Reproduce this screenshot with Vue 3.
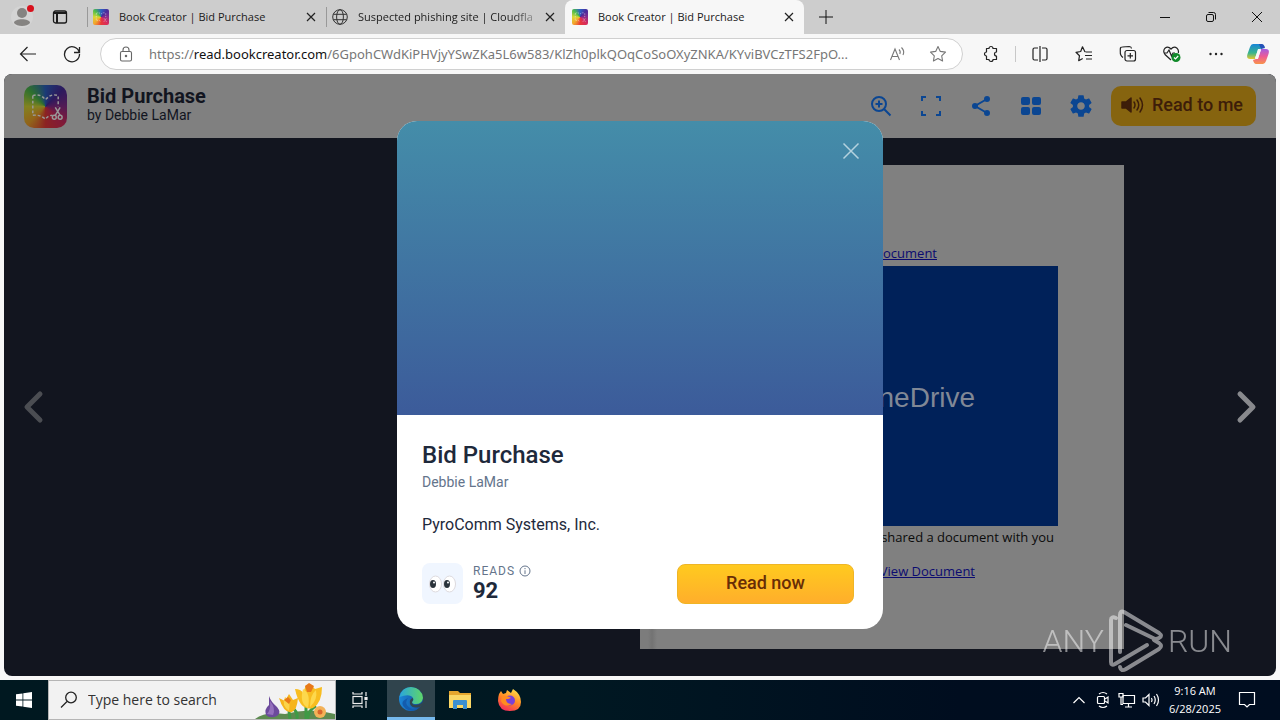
<template>
  <div class="desktop">
    <div class="browser">
      <!-- tab strip -->
      <div class="tab-strip">
        <button class="icon-btn profile" aria-label="Profile">
          <svg width="24" height="24" viewBox="0 0 24 24">
            <circle cx="12" cy="12" r="11" fill="#d4d4d4" />
            <circle cx="12" cy="8" r="5" fill="#858381" />
            <path d="M4 18c0-5 16-5 16 0c-3 4-13 4-16 0z" fill="#858381" />
            <circle cx="20.500" cy="3.500" r="3.500" fill="#d8101c" />
          </svg>
        </button>
        <button class="icon-btn tab-actions" aria-label="Tab actions">
          <svg width="16" height="16" viewBox="0 0 16 16" fill="none" stroke="#1b1b1b" stroke-width="1.300">
            <rect x="1.500" y="2" width="13" height="12" rx="2" />
            <path d="M2 4h12M5 4v10" stroke-width="2" />
          </svg>
        </button>
        <div v-for="(tab, i) in tabs" :key="i" class="tab" :class="{ active: tab.active }">
          <svg v-if="tab.icon === 'globe'" class="favicon" viewBox="0 0 16 16" fill="none" stroke="#333">
            <circle cx="8" cy="8" r="7.300" />
            <ellipse cx="8" cy="8" rx="3.400" ry="7.300" />
            <path d="M1.300 5.300h13.400M1.300 10.700h13.400" />
          </svg>
          <span v-else class="favicon rainbow">
            <svg viewBox="0 0 44 44" fill="none" stroke="#fff" stroke-opacity=".6" stroke-width="2" stroke-dasharray="4 3">
              <path d="M9 12q7-4 13 2q6-6 13-2v10M9 12v20q7-3 13 3M30 35l7-10M37 35l-7-10" />
            </svg>
          </span>
          <span class="tab-title" :class="{ faded: tab.faded }">{{ tab.title }}</span>
          <button class="icon-btn tab-close" aria-label="Close tab">
            <svg width="10" height="10" viewBox="0 0 10 10" stroke="#222" stroke-width="1.200">
              <path d="M1 1l8 8M9 1l-8 8" />
            </svg>
          </button>
        </div>
        <button class="icon-btn new-tab" aria-label="New tab">
          <svg width="14" height="14" viewBox="0 0 14 14" stroke="#111"><path d="M7 0v14M0 7h14" /></svg>
        </button>
        <div class="window-controls">
          <button class="icon-btn" aria-label="Minimize">
            <svg width="12" height="12" viewBox="0 0 12 12" stroke="#111"><path d="M1 6.500h10" /></svg>
          </button>
          <button class="icon-btn" aria-label="Restore">
            <svg width="12" height="12" viewBox="0 0 12 12" fill="none" stroke="#111">
              <rect x="1.500" y="3.500" width="7" height="7" rx="1.500" />
              <path d="M3.500 1.500h5q2 0 2 2v5" />
            </svg>
          </button>
          <button class="icon-btn" aria-label="Close">
            <svg width="12" height="12" viewBox="0 0 12 12" stroke="#111"><path d="M1 1l10 10M11 1l-10 10" /></svg>
          </button>
        </div>
      </div>

      <!-- toolbar -->
      <div class="toolbar">
        <button class="icon-btn nav-btn" aria-label="Back">
          <svg width="18" height="18" viewBox="0 0 18 18" fill="none" stroke="#222" stroke-width="1.200">
            <path d="M17 9H1.500M8.500 2L1.500 9l7 7" />
          </svg>
        </button>
        <button class="icon-btn nav-btn" aria-label="Refresh">
          <svg width="18" height="18" viewBox="0 0 18 18" fill="none" stroke="#222" stroke-width="1.300">
            <path d="M16.300 7.500A7.500 7.500 0 1 0 16.500 9M16.500 2v5.500H11" />
          </svg>
        </button>
        <div class="address">
          <svg class="lock" width="16" height="16" viewBox="0 0 16 16" fill="none" stroke="#666" stroke-width="1.100">
            <rect x="2.500" y="5.500" width="11" height="9.500" rx="1.500" />
            <path d="M5 5.500V4a3 3 0 0 1 6 0v1.500" />
            <circle cx="8" cy="10" r=".7" fill="#555" />
          </svg>
          <div class="url">https://<b>read.bookcreator.com</b>/6GpohCWdKiPHVjyYSwZKa5L6w583/KlZh0plkQOqCoSoOXyZNKA/KYviBVCzTFS2FpO...</div>
          <button class="icon-btn addr-btn" aria-label="Read aloud">
            <svg width="18" height="16" viewBox="0 0 18 16" fill="none" stroke="#777" stroke-width="1.100">
              <path d="M1.500 14L6 3l4.500 11M3 10.500h6M10 3.500q2 2 .8 4.500M12.500 1.500q3.500 3.500 1.500 7.500" />
            </svg>
          </button>
          <button class="icon-btn addr-btn" aria-label="Add to favorites">
            <svg width="18" height="18" viewBox="0 0 18 18" fill="none" stroke="#777" stroke-width="1.100" stroke-linejoin="round">
              <path d="M9 1.500l2.300 4.900 5.200.7-3.800 3.700.9 5.200L9 13.500l-4.600 2.500.9-5.200L1.500 7.100l5.200-.7z" />
            </svg>
          </button>
        </div>
        <div class="toolbar-actions">
          <button class="icon-btn" aria-label="Extensions">
            <svg width="18" height="18" viewBox="0 0 18 18" fill="none" stroke="#222" stroke-width="1.200" stroke-linejoin="round">
              <path d="M5 3.500h2a2 2 0 0 1 4 0h3.500V7a2 2 0 1 0 0 4v3.500H11a2 2 0 0 1-4 0H4.500V11a2 2 0 0 1 0-4V3.500z" />
            </svg>
          </button>
          <span class="divider"></span>
          <button class="icon-btn" aria-label="Split screen">
            <svg width="18" height="18" viewBox="0 0 18 18" fill="none" stroke="#222" stroke-width="1.200">
              <path d="M7 3H3.500Q2 3 2 4.500v9Q2 15 3.500 15H7M11 3h3.500Q16 3 16 4.500v9q0 1.500-1.500 1.500H11M9 1v16" />
            </svg>
          </button>
          <button class="icon-btn" aria-label="Favorites">
            <svg width="18" height="18" viewBox="0 0 18 18" fill="none" stroke="#222" stroke-width="1.200" stroke-linejoin="round">
              <path d="M10 7L7.500 1.800 5.700 6.500 1 7.300l3.500 3.400-.8 5 4-2.200M10.500 7H17M10 10.500h7M11 14h6" />
            </svg>
          </button>
          <button class="icon-btn" aria-label="Collections">
            <svg width="18" height="18" viewBox="0 0 18 18" fill="none" stroke="#222" stroke-width="1.200">
              <rect x="6" y="5.500" width="10.500" height="10.500" rx="2" />
              <path d="M11.300 8v5.500M8.500 10.800H14M4 12.500Q1 10.500 1.300 6.500V4q0-2 2-2l7-.5q2 0 2.200 2" />
            </svg>
          </button>
          <button class="icon-btn" aria-label="Browser essentials">
            <svg width="20" height="18" viewBox="0 0 20 18" fill="none" stroke="#222" stroke-width="1.200">
              <path d="M9 15L3 9.500Q.5 6 3 3.200q3-2.500 6 .8 3-3.300 6-.8 2 2 1.300 4.800M2 8h3l2-3 2.500 6L11 8h2" />
              <circle cx="14" cy="12.500" r="4.500" fill="#118a2a" stroke="none" />
              <path d="M12 12.500l1.500 1.500 2.700-3" stroke="#fff" />
            </svg>
          </button>
          <button class="icon-btn" aria-label="Settings and more">
            <svg width="16" height="16" viewBox="0 0 16 16" fill="#222">
              <circle cx="2.500" cy="8" r="1.200" /><circle cx="8" cy="8" r="1.200" /><circle cx="13.500" cy="8" r="1.200" />
            </svg>
          </button>
          <button class="icon-btn" aria-label="Copilot">
            <svg width="22" height="20" viewBox="0 0 22 20">
              <defs>
                <linearGradient id="cpA" x1="0" y1="0" x2="0" y2="1">
                  <stop offset="0" stop-color="#1785d8" /><stop offset=".6" stop-color="#39b58c" /><stop offset="1" stop-color="#e5c82e" />
                </linearGradient>
                <linearGradient id="cpB" x1="0" y1="0" x2="0" y2="1">
                  <stop offset="0" stop-color="#a45ce0" /><stop offset=".5" stop-color="#ee5a94" /><stop offset="1" stop-color="#f8944a" />
                </linearGradient>
              </defs>
              <path d="M6 0h7q2 0 3 4l-3 1-2 0-3 10H3q-4 0-2.500-5L3 3q1-3 3-3z" fill="url(#cpA)" />
              <path d="M12 0h3q2 0 3 4l-4 1z" fill="#2452b8" />
              <path d="M16 20H9q-2 0-3-4l3-1h2l3-10h5q4 0 2.500 5L19 17q-1 3-3 3z" fill="url(#cpB)" />
              <path d="M11 6h3l-3 8H8z" fill="#f7f7f7" />
            </svg>
          </button>
        </div>
      </div>

      <!-- web page -->
      <main class="reader">
        <header class="reader-head">
          <span class="logo rainbow">
            <svg viewBox="0 0 44 44" fill="none" stroke="#fff" stroke-width="1.500">
              <path d="M9 11q7-3 13 4q6-7 13-4v11M9 11v20q7-1 13 4q3-4 7-4" stroke-dasharray="3 2" />
              <path d="M32 31l5-8M37 31l-5-8" />
              <circle cx="31" cy="33" r="2" /><circle cx="37" cy="33" r="2" />
            </svg>
          </span>
          <div class="book-info">
            <h1>Bid Purchase</h1>
            <p>by Debbie LaMar</p>
          </div>
          <div class="reader-tools">
            <button class="icon-btn" aria-label="Zoom in">
              <svg width="24" height="24" viewBox="0 0 24 24" fill="none" stroke="#0b4692" stroke-width="2">
                <circle cx="10" cy="10" r="7" /><path d="M15 15l6.500 6.500M10 6.500v7M6.500 10h7" />
              </svg>
            </button>
            <button class="icon-btn" aria-label="Full screen">
              <svg width="24" height="24" viewBox="0 0 24 24" fill="none" stroke="#0b4692" stroke-width="2">
                <path d="M3 7V3h4M17 3h4v4M21 17v4h-4M7 21H3v-4" />
              </svg>
            </button>
            <button class="icon-btn" aria-label="Share">
              <svg width="24" height="24" viewBox="0 0 24 24" fill="#0b4692" stroke="#0b4692" stroke-width="2">
                <path d="M18 5L6 12l12 7" fill="none" />
                <circle cx="18" cy="5" r="2" /><circle cx="6" cy="12" r="2" /><circle cx="18" cy="19" r="2" />
              </svg>
            </button>
            <button class="icon-btn" aria-label="Pages">
              <svg width="24" height="24" viewBox="0 0 24 24" fill="#0b4692">
                <rect x="2" y="3" width="9" height="8" rx="2" /><rect x="13" y="3" width="9" height="8" rx="2" />
                <rect x="2" y="13" width="9" height="8" rx="2" /><rect x="13" y="13" width="9" height="8" rx="2" />
              </svg>
            </button>
            <button class="icon-btn" aria-label="Settings">
              <svg width="26" height="26" viewBox="0 0 24 24" fill="#0b4692">
                <path d="M19.430 12.980c.04-.32.070-.64.070-.98s-.03-.66-.07-.98l2.110-1.650c.19-.15.240-.42.120-.64l-2-3.460c-.12-.22-.39-.3-.61-.22l-2.490 1c-.52-.4-1.080-.73-1.690-.98l-.38-2.650C14.460 2.180 14.250 2 14 2h-4c-.25 0-.46.180-.49.420l-.38 2.650c-.61.250-1.170.590-1.690.980l-2.490-1c-.23-.09-.49 0-.61.220l-2 3.460c-.13.220-.07.490.120.640l2.110 1.650c-.04.320-.07.650-.07.980s.03.660.070.980l-2.110 1.650c-.19.150-.24.420-.12.640l2 3.460c.12.220.39.300.61.220l2.490-1c.52.400 1.080.730 1.690.980l.38 2.650c.03.240.24.420.49.420h4c.25 0 .46-.18.490-.42l.38-2.650c.61-.25 1.170-.59 1.690-.98l2.490 1c.23.090.49 0 .61-.22l2-3.460c.12-.22.070-.49-.12-.64l-2.110-1.650zM12 15.500c-1.930 0-3.500-1.570-3.500-3.500s1.570-3.500 3.500-3.500 3.500 1.570 3.500 3.500-1.570 3.500-3.500 3.500z" />
              </svg>
            </button>
          </div>
          <button class="read-to-me">
            <svg width="24" height="24" viewBox="0 0 24 24" fill="none" stroke="#3d1d09" stroke-width="1.500" stroke-linecap="round">
              <path d="M2 9h4l5-4v14l-5-4H2z" fill="#3d1d09" stroke-linejoin="round" />
              <path d="M14 9q2 3 0 6M17 7q3.500 5 0 10M20 5q5 7 0 14" />
            </svg>
            <span>Read to me</span>
          </button>
        </header>

        <div class="stage">
          <button class="icon-btn page-nav prev" aria-label="Previous page">
            <svg width="24" height="36" viewBox="0 0 24 36" fill="none" stroke-width="5" stroke-linecap="round" stroke-linejoin="round">
              <path d="M18 5L5 18l13 13" />
            </svg>
          </button>
          <div class="spread">
            <article class="page">
              <p class="line first"><a href="#">View Document</a></p>
              <div class="banner">OneDrive</div>
              <p class="line shared">shared a document with you</p>
              <p class="line last"><a href="#">View Document</a></p>
            </article>
          </div>
          <button class="icon-btn page-nav next" aria-label="Next page">
            <svg width="24" height="36" viewBox="0 0 24 36" fill="none" stroke-width="5" stroke-linecap="round" stroke-linejoin="round">
              <path d="M6 5l13 13L6 31" />
            </svg>
          </button>
        </div>

        <!-- book details dialog -->
        <div class="dialog-layer">
          <section class="dialog" role="dialog" aria-labelledby="dialog-title">
            <div class="cover">
              <button class="icon-btn" aria-label="Close dialog">
                <svg width="18" height="18" viewBox="0 0 18 18" stroke="#b4d2de" stroke-width="1.500">
                  <path d="M1.500 1.500l15 15M16.500 1.500l-15 15" />
                </svg>
              </button>
            </div>
            <div class="details">
              <h2 id="dialog-title">Bid Purchase</h2>
              <p class="author">Debbie LaMar</p>
              <p class="about">PyroComm Systems, Inc.</p>
              <div class="dialog-foot">
                <span class="eyes">
                  <svg width="27" height="18" viewBox="0 0 27 18">
                    <ellipse cx="6.500" cy="9" rx="6" ry="8" fill="#fff" stroke="#dcd9dd" />
                    <ellipse cx="20.500" cy="9" rx="6" ry="8" fill="#fff" stroke="#dcd9dd" />
                    <ellipse cx="4" cy="9" rx="3" ry="4" fill="#29323a" />
                    <ellipse cx="18" cy="9" rx="3" ry="4" fill="#29323a" />
                    <circle cx="5" cy="7.500" r="1" fill="#fff" /><circle cx="19" cy="7.500" r="1" fill="#fff" />
                  </svg>
                </span>
                <div class="reads">
                  <span class="reads-label">READS
                    <svg width="12" height="12" viewBox="0 0 12 12" fill="none" stroke="#64748b">
                      <circle cx="6" cy="6" r="5" /><path d="M6 5.300V9M6 3v1.200" />
                    </svg>
                  </span>
                  <span class="reads-count">92</span>
                </div>
                <button class="read-now">Read now</button>
              </div>
            </div>
          </section>
        </div>
      </main>
    </div>

    <!-- recorder watermark -->
    <div class="watermark">
      <span>ANY</span>
      <svg width="56" height="64" viewBox="0 0 56 64" fill="none" stroke="#fff" stroke-width="4" stroke-linejoin="round" stroke-linecap="round">
        <path d="M8 9q-5-2-5 2v42q0 4 4 2l32-19" />
        <path d="M12 43V6q0-5 4-3l35 21q4 3 0 5t-6 0L18 16" />
        <path d="M12 58q1 5 6 2l33-20q4-3 0-6l-5-3" />
      </svg>
      <span>RUN</span>
    </div>

    <!-- windows taskbar -->
    <footer class="taskbar">
      <button class="icon-btn start" aria-label="Start">
        <svg width="16" height="16" viewBox="0 0 16 16" fill="#fff">
          <path d="M0 2.300l6.500-.9v6.200H0zM7.300 1.300L16 0v7.600H7.300zM0 8.400h6.500v6.200L0 13.700zM7.300 8.400H16V16l-8.700-1.300z" />
        </svg>
      </button>
      <div class="search">
        <svg width="18" height="18" viewBox="0 0 18 18" fill="none" stroke="#222" stroke-width="1.300">
          <circle cx="11" cy="6.500" r="5.300" /><path d="M7 10.500l-6 6" />
        </svg>
        <input type="text" placeholder="Type here to search" aria-label="Type here to search" />
        <svg class="flowers" width="80" height="38" viewBox="0 0 80 38">
          <path d="M0 38Q10 30 30 33Q55 26 80 33v5z" fill="#5d8b50" />
          <path d="M14 15q2 6 8 11 5 6 0 9-7 3-11-1-2-6 3-10z" fill="#6c4a9c" />
          <path d="M15 20q1 9-3 13l6 1q3-7-3-14z" fill="#9470bd" />
          <path d="M34 30l1 8M51 26v12M42 38q1-8-5-11M53 38q-1-8 8-13" stroke="#3f9a45" stroke-width="3" fill="none" />
          <path d="M24 17l6 3 4-7 4 6 5-2q-1 12-6 14-8 2-13-14z" fill="#f6b51c" />
          <path d="M30 16q6 2 4 14-8-6-4-14z" fill="#fbd34a" />
          <path d="M40 8q6 0 8 4l3-8 5 0 4 4 7-2q0 16-9 21-13 4-18-19z" fill="#f8bd20" />
          <path d="M48 8q8 4 5 19-9-5-5-19zM61 9q2 10-6 17 0-12 6-17z" fill="#fdd84d" />
          <path d="M50 5l4-3 5 3-3 6h-4zM29 19l4-3 3 3-2 4z" fill="#e87918" />
          <circle cx="65" cy="31" r="6" fill="#f3b257" /><circle cx="65" cy="31" r="2.500" fill="#d9662c" />
        </svg>
      </div>
      <button class="icon-btn task" aria-label="Task view">
        <svg width="18" height="18" viewBox="0 0 18 18" fill="none" stroke="#eee" stroke-width="1.200">
          <rect x="2" y="5.500" width="9" height="7" /><path d="M2 1v2h9V1M2 17v-2h9v2M15 1v4M15 10v7" />
          <rect x="14" y="6.500" width="2" height="2" fill="#fff" />
        </svg>
      </button>
      <button class="icon-btn task running" aria-label="Microsoft Edge">
        <svg width="26" height="26" viewBox="0 0 26 26">
          <defs>
            <linearGradient id="edgeTop"><stop offset="0" stop-color="#2aa6dc" /><stop offset="1" stop-color="#5fd668" /></linearGradient>
            <linearGradient id="edgeLow"><stop offset="0" stop-color="#1c87d8" /><stop offset="1" stop-color="#124c9c" /></linearGradient>
          </defs>
          <circle cx="13" cy="13" r="12" fill="url(#edgeLow)" />
          <path d="M1.500 11Q4 1 13 1q11 1 12 11-1 6-7 6-4 0-4-2 2-2 1-4-3-5-13.500-1z" fill="url(#edgeTop)" />
          <path d="M15 12q1 2-1 4 0 3 4 3 4 0 7-3-1 4-3 5-8 2-10-3-1-5 3-6z" fill="#32464f" />
          <path d="M10 12q-5 7 4 11 4 1 7-1-6 5-13 1Q0 16 10 12z" fill="#135cae" />
        </svg>
      </button>
      <button class="icon-btn task" aria-label="File Explorer">
        <svg width="24" height="22" viewBox="0 0 24 22">
          <path d="M1 2h9l2 2h11v15H1z" fill="#e6a62e" /><path d="M1 6h22v13H1z" fill="#fbd766" />
          <path d="M5 20v-8q0-1 1-1h12q1 0 1 1v8h-4v-4H9v4z" fill="#3b8fd2" />
        </svg>
      </button>
      <button class="icon-btn task" aria-label="Firefox">
        <svg width="24" height="24" viewBox="0 0 24 24">
          <defs>
            <linearGradient id="fox" x1=".8" y1="0" x2=".3" y2="1">
              <stop offset="0" stop-color="#ffe14a" /><stop offset=".5" stop-color="#ff8a24" /><stop offset="1" stop-color="#f52c5c" />
            </linearGradient>
          </defs>
          <path d="M2 6l2-3 2 3 3-1 1-3 4 3 2-4q8 5 8 13 0 9-11 9T1 13q0-4 1-7z" fill="url(#fox)" />
          <circle cx="13" cy="12.500" r="5" fill="#7a40d8" />
          <path d="M5 8q5-1 9 2-2 1-5 1 0 5 6 5-8 4-11-3z" fill="#ff8c20" />
        </svg>
      </button>
      <div class="tray">
        <svg class="tray-icon" height="8" viewBox="0 0 12 8" fill="none" stroke="#fff" stroke-width="1.200"><path d="M.5 7L6 1.500 11.500 7" /></svg>
        <svg class="tray-icon" height="18" viewBox="0 0 14 18" fill="none" stroke="#fff" stroke-width="1.200">
          <rect x="1.500" y="5.500" width="7" height="7" rx="1" /><path d="M9 8l3-2v6l-3-2M3 3q4-3 8 0M3 15q4 3 8 0" />
        </svg>
        <svg class="tray-icon" height="16" viewBox="0 0 18 16" fill="none" stroke="#fff" stroke-width="1.200">
          <path d="M5 3.500h11.500v8H5V3.500M10.500 11.500V15M7 15h7" /><path d="M1 1.500h4v3.500H1zM3 5v7.500h2" />
        </svg>
        <svg class="tray-icon" height="16" viewBox="0 0 18 16" fill="none" stroke="#fff" stroke-width="1.200">
          <path d="M1 6h2.500L7 2.500v11L3.500 10H1zM9.500 6q1.200 2 0 4M12 4q2.500 4 0 8M14.500 2q4 6 0 12" />
        </svg>
        <div class="clock"><span>9:16 AM</span><span>6/28/2025</span></div>
        <svg class="notify" width="18" height="18" viewBox="0 0 18 18" fill="none" stroke="#fff" stroke-width="1.200">
          <path d="M1.500 1.500h15v12h-5L9 16l-2.500-2.500h-5z" />
        </svg>
      </div>
    </footer>
  </div>
</template>

<script setup>
const tabs = [
  { title: 'Book Creator | Bid Purchase', icon: 'book', active: false },
  { title: 'Suspected phishing site | Cloudfla', icon: 'globe', active: false, faded: true },
  { title: 'Book Creator | Bid Purchase', icon: 'book', active: true }
]
</script>

<style>
body {
  margin: 0;
}
</style>

<style scoped>
.desktop {
  position: relative;
  height: 100vh;
  display: flex;
  flex-direction: column;
  overflow: hidden;
  font-family: 'Open Sans', 'Noto Sans', sans-serif;
}

.desktop * {
  box-sizing: border-box;
}

h1, h2, p {
  margin: 0;
}

.icon-btn {
  display: flex;
  align-items: center;
  justify-content: center;
  padding: 0;
  border: none;
  background: none;
  flex-shrink: 0;
  cursor: pointer;
}

.browser {
  flex: 1;
  min-height: 0;
  display: flex;
  flex-direction: column;
  background: #f7f7f7;
}

/* tab strip */
.tab-strip {
  height: 34px;
  display: flex;
  align-items: center;
  background: #cdcdcd;
}

.profile {
  width: 44px;
}

.tab-actions {
  width: 32px;
  margin-right: 11px;
}

.tab {
  width: 239px;
  height: 34px;
  display: flex;
  align-items: center;
  padding: 0 7px 0 6px;
  background: linear-gradient(#999, #999) left center / 1px 20px no-repeat;
}

.tab.active {
  padding-left: 7px;
  background: #f7f7f7;
  border-radius: 8px 8px 0 0;
}

.favicon {
  width: 16px;
  height: 16px;
  flex-shrink: 0;
  margin-right: 10px;
  border-radius: 2px;
}

.rainbow {
  display: block;
  background: conic-gradient(from 0deg at 50% 50%, #2c62c4, #4a2c9c 45deg, #8a2c8c 90deg, #d82c5c 135deg, #e93a38 180deg, #f2a62c 225deg, #d8d936 270deg, #4dbb4c 315deg, #2c62c4);
}

.rainbow svg {
  display: block;
  width: 100%;
  height: 100%;
}

.tab-title {
  flex: 1;
  min-width: 0;
  overflow: hidden;
  white-space: nowrap;
  font-size: 11px;
  line-height: 16px;
  color: #1b1b1b;
}

.faded {
  mask-image: linear-gradient(90deg, #000 155px, transparent 185px);
}

.tab-close {
  width: 16px;
  height: 16px;
}

.new-tab {
  width: 44px;
}

.window-controls {
  margin-left: auto;
  display: flex;
}

.window-controls .icon-btn {
  width: 46px;
  height: 34px;
}

/* toolbar */
.toolbar {
  height: 40px;
  display: flex;
  align-items: center;
  padding: 0 2px 0 6px;
}

.nav-btn {
  width: 44px;
  height: 32px;
}

.address {
  flex: 1;
  min-width: 0;
  height: 32px;
  display: flex;
  align-items: center;
  margin-left: 6px;
  padding: 0 4px 0 17px;
  background: #fff;
  border: 1px solid #d0d0d0;
  border-radius: 16px;
}

.lock {
  flex-shrink: 0;
  margin-right: 15px;
}

.url {
  flex: 1;
  min-width: 0;
  overflow: hidden;
  white-space: nowrap;
  font: 13px/20px 'Noto Sans', sans-serif;
  color: #777;
}

.url b {
  font-weight: 400;
  color: #111;
}

.addr-btn {
  width: 40px;
}

.toolbar-actions {
  display: flex;
  align-items: center;
  margin-left: 6px;
}

.toolbar-actions .icon-btn {
  width: 44px;
  height: 32px;
}

.toolbar-actions .icon-btn:last-child {
  width: 40px;
}

.divider {
  width: 1px;
  height: 16px;
  margin: 0 2px;
  background: #c8c8c8;
}

/* reader */
.reader {
  position: relative;
  flex: 1;
  min-height: 0;
  margin: 0 4px 4px;
  display: flex;
  flex-direction: column;
  border-radius: 8px;
  overflow: hidden;
  background: #12151f;
}

.reader-head {
  height: 64px;
  display: flex;
  align-items: center;
  padding: 0 20px;
  background: #808080;
  font-family: Roboto, sans-serif;
}

.logo {
  width: 43px;
  height: 43px;
  border-radius: 10px;
  filter: brightness(.6);
}

.book-info {
  margin-left: 20px;
  padding-bottom: 4px;
  color: #12151f;
}

.book-info h1 {
  font-size: 20px;
  line-height: 22px;
  font-weight: 700;
}

.book-info p {
  font-size: 14px;
  line-height: 16px;
}

.reader-tools {
  display: flex;
  margin-left: auto;
}

.reader-tools .icon-btn {
  width: 50px;
  height: 40px;
}

.read-to-me {
  height: 40px;
  display: flex;
  align-items: center;
  gap: 8px;
  margin-left: 5px;
  padding: 0 13px 2px 9px;
  border: none;
  border-radius: 10px;
  background: #86640f;
  color: #3d1d09;
  font: 500 18px/24px Roboto, sans-serif;
}

.stage {
  flex: 1;
  display: flex;
  align-items: center;
  justify-content: space-between;
}

.page-nav {
  width: 60px;
  height: 60px;
}

.prev {
  stroke: #4b4d52;
}

.next {
  stroke: #88898d;
}

.spread {
  width: 968px;
  display: flex;
  justify-content: flex-end;
}

.page {
  width: 484px;
  height: 484px;
  padding: 78px 66px 0;
  background: linear-gradient(90deg, #7c7c7c 8px, #737373 12px, #808080 17px);
  font-size: 13px;
  line-height: 20px;
  color: #0b0b0b;
  text-align: right;
}

.page a {
  color: #0b0b70;
}

.first {
  padding: 0 121px 3px 0;
}

.banner {
  height: 260px;
  padding: 114px 83px 0 0;
  background: #002159;
  color: #808896;
  font: 28px/36px 'Liberation Sans', sans-serif;
}

.shared {
  padding: 1px 4px 14px 0;
}

.last {
  padding-right: 83px;
}

/* dialog */
.dialog-layer {
  position: absolute;
  inset: 0;
  display: flex;
  align-items: center;
  justify-content: center;
}

.dialog {
  width: 486px;
  border-radius: 20px;
  overflow: hidden;
  background: #fff;
  color: #1e293b;
  font-family: Roboto, sans-serif;
}

.cover {
  height: 294px;
  display: flex;
  justify-content: flex-end;
  align-items: flex-start;
  padding: 21px 23px;
  background: linear-gradient(#448da9, #3c5b9a);
}

.details {
  padding: 24px 29px 25px 25px;
}

.details h2 {
  font-size: 24px;
  line-height: 32px;
  font-weight: 500;
}

.author {
  font-size: 14px;
  line-height: 22px;
  color: #64748b;
}

.about {
  margin-top: 19px;
  font-size: 16px;
  line-height: 26px;
}

.dialog-foot {
  display: flex;
  align-items: flex-end;
  margin-top: 25px;
}

.eyes {
  width: 41px;
  height: 41px;
  display: flex;
  align-items: center;
  justify-content: center;
  border-radius: 8px;
  background: #f0f6ff;
}

.reads {
  display: flex;
  flex-direction: column;
  margin-left: 10px;
}

.reads-label {
  display: flex;
  align-items: center;
  gap: 4px;
  font-size: 12px;
  line-height: 14px;
  letter-spacing: 1px;
  color: #64748b;
}

.reads-count {
  font-size: 22px;
  line-height: 26px;
  font-weight: 700;
}

.read-now {
  width: 177px;
  height: 40px;
  margin-left: auto;
  padding: 0 0 2px;
  border: 1px solid #efb526;
  border-radius: 8px;
  background: linear-gradient(#ffca1f, #ffae2b);
  color: #682d06;
  font: 500 18px/24px Roboto, sans-serif;
}

/* watermark */
.watermark {
  position: absolute;
  right: 48px;
  bottom: 47px;
  display: flex;
  align-items: center;
  gap: 4px;
  color: #fff;
  opacity: .5;
  font: 300 32px/44px Roboto, sans-serif;
}

/* taskbar */
.taskbar {
  height: 40px;
  display: flex;
  align-items: stretch;
  background: linear-gradient(90deg, #001820, #001822 45%, #000d1f 75%, #000d20);
}

.start {
  width: 48px;
}

.search {
  width: 288px;
  display: flex;
  align-items: center;
  padding-left: 11px;
  background: #f2f2f2;
  border: 1px solid #b5b5b5;
}

.search input {
  flex: 1;
  min-width: 0;
  padding: 0 0 0 10px;
  border: none;
  outline: none;
  background: none;
  font: 14px/20px 'Open Sans', 'Noto Sans', sans-serif;
}

.search input::placeholder {
  color: #333;
  opacity: 1;
}

.flowers {
  flex-shrink: 0;
}

.task {
  width: 48px;
}

.task + .task {
  margin-left: 1px;
}

.task + .running {
  margin-left: 3px;
  background: #30444d;
  border-bottom: 3px solid #76b9ed;
}

.tray {
  display: flex;
  align-items: center;
  margin-left: auto;
  padding-right: 24px;
}

.tray-icon {
  width: 24px;
}

.clock {
  display: flex;
  flex-direction: column;
  align-items: center;
  margin-left: 6px;
  font-size: 11px;
  line-height: 18px;
  color: #fff;
}

.notify {
  margin-left: 17px;
}
</style>
